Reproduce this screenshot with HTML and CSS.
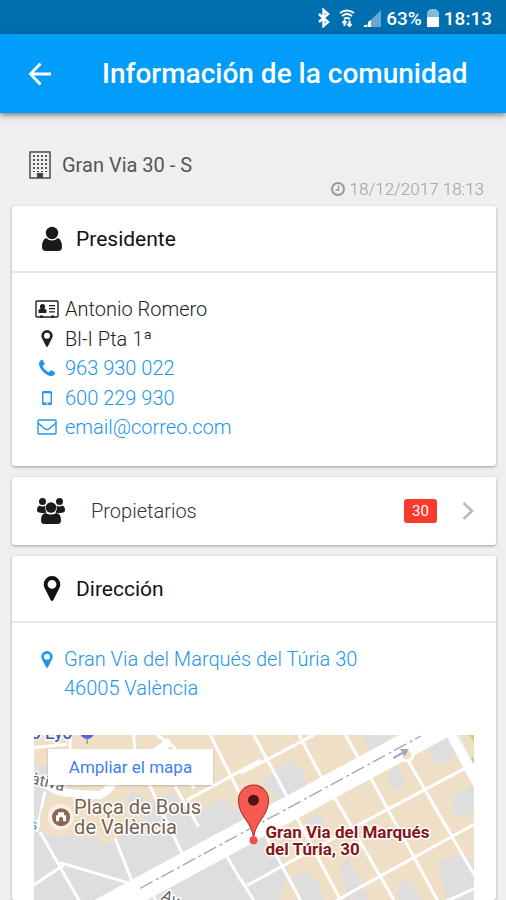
FILE: index.html
```html
<!DOCTYPE html>
<html lang="es">
<head>
<meta charset="utf-8">
<meta name="viewport" content="width=device-width, initial-scale=1">
<title>Información de la comunidad</title>
<link rel="stylesheet" href="styles.css">
</head>
<body>
<svg class="defs" aria-hidden="true">
  <symbol id="marker" viewBox="0 0 12 18"><path fill-rule="evenodd" d="M6 0a6 6 0 0 1 6 6q0 1.300-.5 2.300L7 17.200q-1 1.600-2 0L.5 8.300Q0 7.300 0 6a6 6 0 0 1 6-6zM6 2.800a3.200 3.200 0 1 0 0 6.400 3.200 3.200 0 0 0 0-6.400z"/></symbol>
</svg>
<div class="app">
  <div class="status">
    <svg class="bt" width="14" height="20" viewBox="0 0 14 20" fill="none" stroke="#fff" stroke-width="2.400"><path d="M2 6l9 8-4.500 4V2L11 6l-9 8"/></svg>
    <svg class="wifi" width="16" height="20" viewBox="0 0 16 20" fill="none" stroke="#fff" stroke-width="1.800"><path d="M1 5q7-5 14 0M3 8q5-4 10 0M5 11q3-2 6 0"/><path d="M5.500 18v-5M3.500 15l2-2 2 2M10.500 12.500v5M8.500 16l2 2 2-2" stroke-width="2"/></svg>
    <svg class="signal" width="18" height="18" viewBox="0 0 18 18"><path d="M1 18L18 1v17z" fill="#68a9d2"/><path d="M1 18v-2h3v2zM5 18v-5l3-2v7z" fill="#fff"/></svg>
    <span class="level">63%</span>
    <svg class="battery" width="12" height="18" viewBox="0 0 12 18"><path d="M3 0h6l3 3v5H0V3z" fill="#81b9dc"/><path d="M0 8h12v10H0z" fill="#fff"/></svg>
    <time>18:13</time>
  </div>
  <header class="toolbar">
    <button class="back" type="button" aria-label="Volver"><svg width="24" height="24" viewBox="0 0 24 24" fill="none" stroke="#fff" stroke-width="2.800"><path d="M12.500 1.500L2.500 12l10 10.500M2 12h21"/></svg></button>
    <h1>Información de la comunidad</h1>
  </header>
  <main>
    <div class="community">
      <svg width="22" height="28" viewBox="0 0 22 28"><rect x="1" y="1" width="20" height="26" fill="#eee" stroke="#555" stroke-width="1.600"/><path d="M5 4v17M9 4v17M13 4v17M17 4v17" stroke="#555" stroke-width="2" stroke-dasharray="2 2" fill="none"/><path d="M8 22h6v5H8z" fill="#444"/></svg>
      <span>Gran Via 30 - S</span>
    </div>
    <div class="updated">
      <svg width="14" height="14" viewBox="0 0 14 14" fill="none" stroke="#999"><circle cx="7" cy="7" r="6" stroke-width="2"/><path d="M7.500 3.500V8H4.500" stroke-width="1.400"/></svg>
      <time>18/12/2017 18:13</time>
    </div>

    <section class="card">
      <div class="card-head">
        <svg width="22" height="26" viewBox="0 0 22 26" fill="#1a1a1a"><circle cx="11" cy="7" r="6.200"/><path d="M5 12q6 5 12 0 4 2 4 9 0 4-4 4H5q-4 0-4-4 0-7 4-9z"/></svg>
        <h2>Presidente</h2>
      </div>
      <ul class="details">
        <li><svg class="ic" width="24" height="18" viewBox="0 0 24 18"><path d="M1 2q0-1 1-1h20q1 0 1 1v14q0 1-1 1H2q-1 0-1-1z" fill="#fff" stroke="#222" stroke-width="1.400"/><circle cx="7.500" cy="6.500" r="2.600"/><path d="M3.500 13V10l2-1.500h4l2 1.500v3zM14 5h6v1.200h-6zM14 8h6v1.200h-6zM14 11.200h6v1.200h-6zM5 15.500h3V18H5zM16 15.500h3V18h-3z"/></svg>Antonio Romero</li>
        <li><svg class="ic" width="12" height="17"><use href="#marker"/></svg>Bl-I Pta 1ª</li>
        <li><a href="tel:963930022"><svg class="ic" width="16" height="16" viewBox="0 0 1408 1408"><path d="M1408 1112q0 27-10 70.500t-21 68.500q-21 50-122 106-94 51-186 51-27 0-53-3.500t-57.500-12.500-47-14.500-55.500-20.500-49-18q-98-35-175-83-127-79-264-216t-216-264q-48-77-83-175-3-9-18-49t-20.500-55.500-14.500-47-12.500-57.500-3.500-53q0-92 51-186 56-101 106-122 25-11 68.500-21t70.500-10q14 0 21 3 18 6 53 76 11 19 30 54t35 63.500 31 53.500q3 4 17.500 25t21.500 35.500 7 28.500q0 20-28.500 50t-62 55-62 53-28.500 46q0 9 5 22.500t8.500 20.500 14 24 11.500 19q76 137 174 235t235 174q2 1 19 11.500t24 14 20.500 8.500 22.500 5q18 0 46-28.500t53-62 55-62 50-28.500q14 0 28.500 7t35.500 21.500 25 17.500q25 15 53.500 31t63.500 35 54 30q70 35 76 53 3 7 3 21z"/></svg>963 930 022</a></li>
        <li><a href="tel:600229930"><svg class="ic" width="10" height="16" viewBox="0 0 10 16"><path fill-rule="evenodd" d="M1.500 1h7Q10 1 10 2.500v11Q10 15 8.500 15h-7Q0 15 0 13.500v-11Q0 1 1.500 1zM1.400 3.200v9.400h7.200V3.200zM4 13.200v1h2v-1z"/></svg>600 229 930</a></li>
        <li><a href="mailto:email@correo.com"><svg class="ic line" width="20" height="16" viewBox="0 0 20 16"><rect x="1" y="1" width="18" height="14" rx="1"/><path d="M1 4l6.500 5.500q2.500 2 5 0L19 4"/></svg>email@correo.com</a></li>
      </ul>
    </section>

    <a class="card owners" href="#propietarios">
      <svg width="28" height="26" viewBox="0 0 28 26" fill="#1a1a1a"><circle cx="5.500" cy="3.500" r="3.500"/><circle cx="22.500" cy="3.500" r="3.500"/><path d="M2.500 7.500q3 2 6 0-1 4 1 7-3 1-7 0Q0 15 0 11.500q0-3 2.500-4zM25.500 7.500q-3 2-6 0 1 4-1 7 3 1 7 0 2.500.500 2.500-3 0-3-2.500-4z"/><circle cx="14" cy="9.500" r="5.300"/><path d="M8.500 15q5.500 3 11 0 4.500 1 4.500 7 0 4-3 4H7q-3 0-3-4 0-6 4.500-7z"/></svg>
      <span class="owners-label">Propietarios</span>
      <span class="badge">30</span>
      <svg width="12" height="18" viewBox="0 0 12 18" fill="none" stroke="#bbb" stroke-width="2.600"><path d="M1.500 1L10 9l-8.500 8"/></svg>
    </a>

    <section class="card address">
      <div class="card-head">
        <svg width="22" height="25" fill="#111"><use href="#marker"/></svg>
        <h2>Dirección</h2>
      </div>
      <a class="place" href="#mapa"><svg class="ic" width="12" height="17"><use href="#marker"/></svg><span>Gran Via del Marqués del Túria 30<br>46005 València</span></a>
      <div class="map" id="mapa">
        <svg class="map-art" width="439" height="165" viewBox="0 0 439 165" preserveAspectRatio="xMinYMin slice">
          <path d="M0 0h439v165H0z" fill="#efdfc6"/>
          <g transform="translate(-14 -10) scale(.3333)">
            <path d="M40 120l45 0 15 80-20 20-20 90 20 20 155 5 5 25 45-10 10-40 80-30 10-50 70-30 55 70 90-50 60 40 60-30v310H40z" fill="#dedede"/>
            <path d="M315 215l25-15 45 30-20 30-40-5z" fill="#dedede"/>
            <g fill="none" stroke="#fff" stroke-width="9">
              <path d="M150 30v50M340 30l5 50M410 30l50 35 60 125M570 30l90 180M500 225l220-120M465 185l70 120M385 175l110 230M285 340l55 140M120 412l220 65M60 320l120 210M40 480l90-60M615 385l80 140M680 490l40-20M75 200L50 320M380 480l30 50M40 68l100-10"/>
              <path d="M40 160l80 40q70 10 120 10 35-20 40-45l170-115" stroke-width="24"/>
            </g>
            <circle cx="118" cy="275" r="58" fill="#efdfc6"/><circle cx="122" cy="275" r="39" fill="#f8eee2"/>
          </g>
          <g transform="translate(206 -10) scale(.3333)">
            <path d="M0 350l60-30 60 70 25 45-30 90H0zM60 170l90-65 35 30 15 55-75 45zM370 30h80l-35 65-30-10zM440 145l30-25 25 50-25 25-20-10zM560 60l60-30 35 45-50 45-35-20zM630 210l70-30v80l-60 15zM590 410l65-20 45 20v115h-80zM470 480l30-20 45 65h-70zM145 460l45-20 45 30 15 55h-80zM300 420l25-25 55 130h-60zM190 285l40-20 25 20-40 50z" fill="#dedede"/>
            <g fill="none" stroke="#fff" stroke-width="9">
              <path d="M40 30l100 185M175 30l75 140M315 30l60 110M0 145L220 30M385 150l205 375M495 95l205 355M275 205l185 320M165 270l135 255M75 330l105 195M0 460l40 65M20 480l110-60 240-130 330-175M285 527l125-70 290-160M610 530l90-40"/>
              <path d="M618 0l110 205" stroke-width="34"/>
              <path d="M650 30l50 90" stroke="#ddd" stroke-width="3"/>
            </g>
            <path d="M685 30h20v30zM690 100l15-10v35z" fill="#bfd66b"/>
          </g>
          <path d="M60 179L420-16" stroke="#fff" stroke-width="25"/>
          <circle cx="372" cy="20" r="6" fill="#efdfc6" stroke="#fff" stroke-width="3"/>
          <path d="M106 153L386 1" stroke="#aaa" stroke-width="1.400" stroke-dasharray="14 4 3 3"/>
          <path d="M358 22l9-5-2-3 9 0-4 7-2-2-9 5z" fill="#a3a7c8"/>
          <g class="street"><text x="-4" y="49" transform="rotate(14 0 49)">àtiva</text><text x="126" y="164" transform="rotate(25 126 164)">Av. del</text></g>
          <text class="metro" x="-3" y="4">o Eyo</text>
          <circle cx="53" cy="-3" r="7" fill="#5367dc"/><path d="M53 4v5" stroke="#777"/>
          <circle cx="27" cy="82" r="9" fill="#8b6651"/><path d="M22 86v-6h2v-3h6v3h2v6h-3v-3q-2-3-4 0v3z" fill="#fff"/>
          <text class="metro-cyan" x="-5" y="95">s</text>
          <g class="poi"><text x="40" y="79">Plaça de Bous</text><text x="40" y="99">de València</text></g>
          <path d="M219 103c-1-17-15-21-15-38a15 15 0 0 1 30 0c0 17-14 21-15 38z" fill="#f65a50" stroke="#a92b25"/>
          <circle cx="219" cy="65" r="5.500" fill="#561214"/><circle cx="219" cy="105" r="4" fill="#ee4e46"/>
          <g class="target"><text x="231" y="103">Gran Via del Marqués</text><text x="231" y="120">del Túria, 30</text></g>
        </svg>
        <a class="enlarge" href="#mapa">Ampliar el mapa</a>
      </div>
    </section>
  </main>
</div>
</body>
</html>
```
FILE: styles.css
```css
* { box-sizing: border-box; }
body { margin: 0; background: #efefef; color: #222; font-family: Roboto, "Liberation Sans", sans-serif; font-size: 20px; }
h1, h2, ul { margin: 0; padding: 0; }
a { color: #2196ea; text-decoration: none; }
svg { flex: none; }
.defs { display: none; }
.app { height: 100vh; display: flex; flex-direction: column; overflow: hidden; }
.status { flex: none; height: 34px; padding: 2px 14px 0 0; display: flex; align-items: center; justify-content: flex-end; gap: 5px; background: #006fb0; color: #fff; font-size: 19px; font-weight: 500; }
.status .bt, .status .wifi { margin-right: 3px; }
.toolbar { flex: none; height: 79px; padding: 0 28px; display: flex; align-items: center; gap: 50px; background: #029dfb; color: #fff; box-shadow: 0 2px 6px rgba(0, 0, 0, .5); position: relative; }
.back { display: flex; padding: 0; border: 0; background: none; }
h1 { font-size: 28px; font-weight: 500; line-height: 36px; white-space: nowrap; }
main { flex: 1; min-height: 0; padding: 36px 10px 0 12px; display: flex; flex-direction: column; }
.community { height: 32px; padding-left: 17px; display: flex; align-items: center; gap: 11px; color: #555; }
.updated { height: 15px; padding-right: 12px; display: flex; align-items: center; justify-content: flex-end; gap: 5px; color: #a0a0a0; font-size: 17px; font-weight: 300; }
.card { flex: none; margin-top: 11px; background: #fff; border-radius: 3px; box-shadow: 0 1px 3px rgba(0, 0, 0, .35); }
.updated + .card { margin-top: 10px; }
.card-head { height: 67px; padding: 0 29px; display: flex; align-items: center; gap: 13px; border-bottom: 2px solid #e8e8e8; color: #111; }
h2 { font-size: 21px; font-weight: 400; }
.details { padding: 21px 22px 24px; list-style: none; font-weight: 300; }
.details li, .details a { display: grid; grid-template-columns: 26px 1fr; column-gap: 5px; align-items: center; height: 30px; }
.details li:nth-child(even) { height: 29px; }
.details .ic { margin: 0 auto; }
.details li > a { grid-column: 1 / -1; }
.ic { fill: currentColor; }
.ic.line { fill: none; stroke: currentColor; stroke-width: 1.4px; }
.owners { height: 68px; padding: 0 22px 0 25px; display: flex; align-items: center; color: #333; font-weight: 300; }
.owners-label { flex: 1; margin-left: 26px; }
.badge { width: 33px; margin-right: 25px; border-radius: 3px; background: #f93a2f; color: #fff; font-size: 15px; line-height: 24px; text-align: center; font-weight: 400; }
.address { flex: 1 0 0; min-height: 0; display: flex; flex-direction: column; }
.place { padding: 22px 22px 0 29px; display: flex; gap: 11px; line-height: 29px; font-weight: 300; }
.place .ic { margin-top: 6px; }
.map { flex: 1; min-height: 0; margin: 32px 22px 0; position: relative; overflow: hidden; }
.map-art { display: block; width: 100%; height: 100%; }
.enlarge { position: absolute; top: 14px; left: 14px; width: 165px; background: #fff; color: #427fed; font-size: 17px; line-height: 36px; text-align: center; box-shadow: 0 1px 2px rgba(0, 0, 0, .2); }
.map text { paint-order: stroke; stroke: #fff; stroke-width: 3px; stroke-linejoin: round; }
.street { font-size: 16px; fill: #666; }
.metro { font-size: 17px; font-weight: 500; fill: #4654b4; }
.metro-cyan { font-size: 16px; fill: #38a6c5; }
.poi { font-size: 20px; fill: #79604d; }
.map .target { font-size: 17px; font-weight: 700; fill: #841619; }
```
